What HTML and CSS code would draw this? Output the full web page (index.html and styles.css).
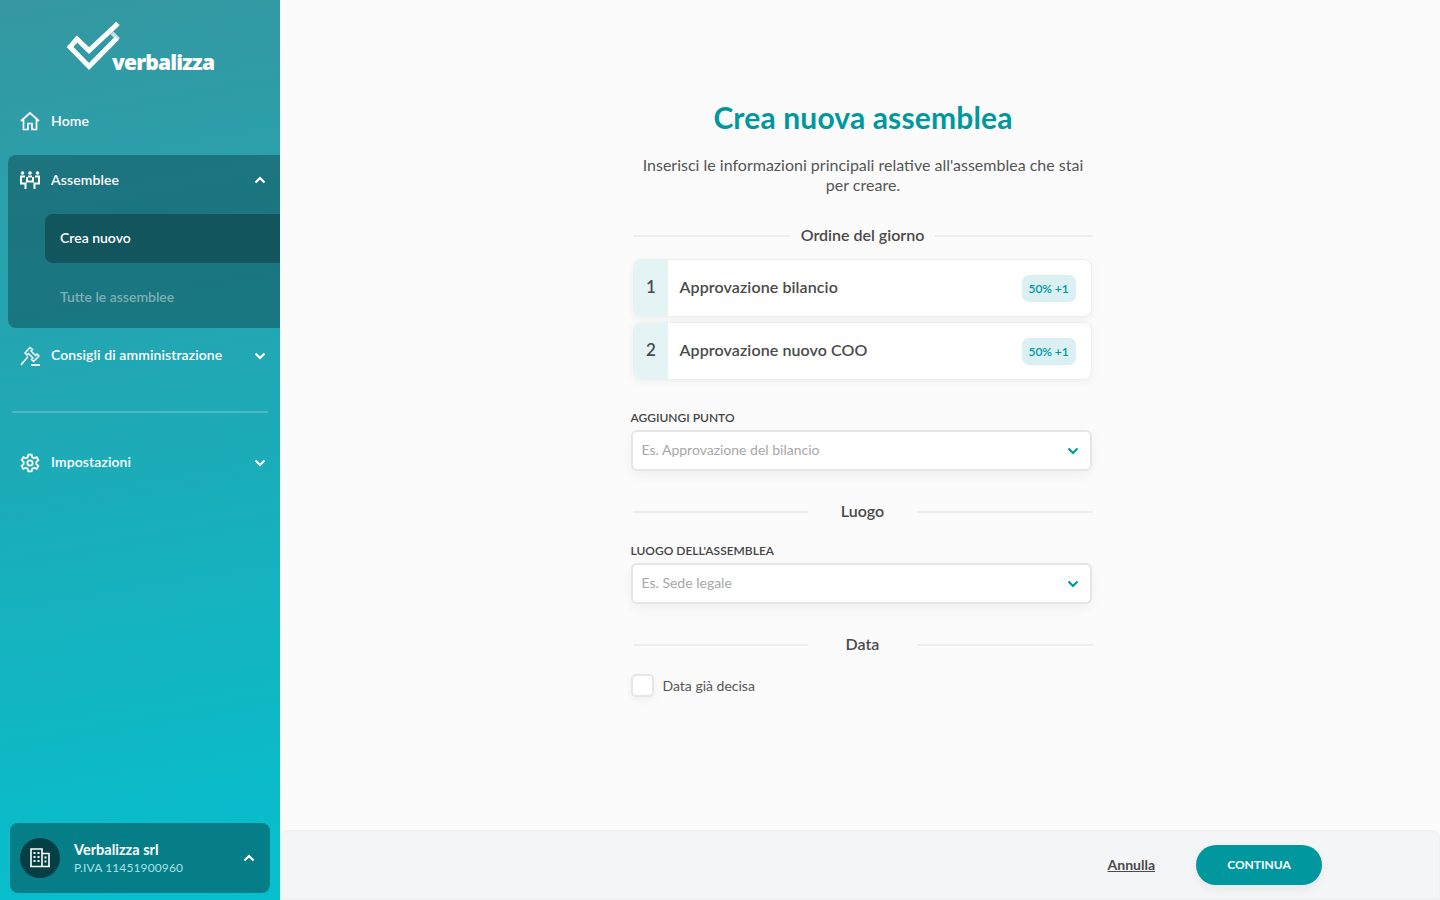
FILE: index.html
```html
<!DOCTYPE html>
<html lang="it">
<head>
    <meta charset="UTF-8">
    <meta name="viewport" content="width=device-width, initial-scale=1.0">
    <title>Crea nuova assemblea</title>
    <link rel="stylesheet" href="styles.css">
</head>
<body>
    <div class="wrapper">
        <aside class="sidebar">
            <div class="logo">
                <svg class="logo-mark" width="60" height="52" viewBox="0 0 60 52" fill="none">
                    <path d="M53 3.5 L24 30.5 L12 19 L5 27 L24 46.5 L52 18" stroke="#fff" stroke-width="5"/>
                    <path d="M53.5 19.5 L47 13" stroke="#fff" stroke-opacity="0.7" stroke-width="4"/>
                </svg>
                <span class="logo-text">verbalizza</span>
            </div>
            <nav class="nav">
                <a class="nav-item" href="#">
                    <svg class="nav-icon" viewBox="0 0 20 20" fill="none" stroke="#fff" stroke-width="1.7"><path d="M1 10 L10 2 L19 10 M3.5 8.5 V18.5 H8 V12.5 H12 V18.5 H16.5 V8.5"/></svg>
                    <span>Home</span>
                </a>
                <div class="nav-group">
                    <a class="nav-item group-head" href="#">
                        <svg class="nav-icon" viewBox="0 0 20 20" fill="#fff"><circle cx="2.5" cy="3" r="1.8"/><circle cx="10" cy="3" r="1.8"/><circle cx="17.5" cy="3" r="1.8"/><path d="M5 6.5 H1 V13.5 H5.5 V19 M15 6.5 H19 V13.5 H14.5 V19 M8 6.5 H12 M7 7 V11.5 H13 V7" fill="none" stroke="#fff" stroke-width="2"/></svg>
                        <span>Assemblee</span>
                        <svg class="chevron" viewBox="0 0 12 8" fill="none" stroke="#fff" stroke-width="2.2"><path d="M1.5 6.5 L6 2 L10.5 6.5"/></svg>
                    </a>
                    <a class="sub-item active" href="#">Crea nuovo</a>
                    <a class="sub-item muted" href="#">Tutte le assemblee</a>
                </div>
                <a class="nav-item board" href="#">
                    <svg class="nav-icon" viewBox="0 0 20 20" fill="none" stroke="#fff" stroke-width="1.5"><path d="M10 1.5 L5 7 L7 9 L8.5 7.5 L13 12 L11.5 13.5 L13.5 15.5 L19 10 L17 8 L15.5 9.5 L11 5 L12.5 3.5 Z M8 10.5 L1 19"/><path d="M11 19 H20" stroke-width="1.8"/></svg>
                    <span>Consigli di amministrazione</span>
                    <svg class="chevron" viewBox="0 0 12 8" fill="none" stroke="#fff" stroke-width="2.2"><path d="M1.5 1.5 L6 6 L10.5 1.5"/></svg>
                </a>
                <hr class="nav-rule">
                <a class="nav-item" href="#">
                    <svg class="nav-icon" viewBox="0 0 24 24" fill="none" stroke="#fff" stroke-width="2.1"><circle cx="12" cy="12" r="3.2"/><path d="M10 2 H14 L14.6 5 L17 6.2 L20 5 L22 8.5 L19.6 10.6 V13.4 L22 15.5 L20 19 L17 17.8 L14.6 19 L14 22 H10 L9.4 19 L7 17.8 L4 19 L2 15.5 L4.4 13.4 V10.6 L2 8.5 L4 5 L7 6.2 L9.4 5 Z"/></svg>
                    <span>Impostazioni</span>
                    <svg class="chevron" viewBox="0 0 12 8" fill="none" stroke="#fff" stroke-width="2.2"><path d="M1.5 1.5 L6 6 L10.5 1.5"/></svg>
                </a>
            </nav>
            <div class="company">
                <div class="company-icon">
                    <svg width="20" height="20" viewBox="0 0 20 20" fill="none" stroke="#fff" stroke-width="1.6"><path d="M0 18.5 H20 M1 18.5 V1 H12 V18.5 M12 5.5 H19 V18.5"/><path d="M3.5 5 H5.5 M7.5 5 H9.5 M3.5 9 H5.5 M7.5 9 H9.5 M3.5 13 H5.5 M7.5 13 H9.5 M14.5 9.5 H16.5 M14.5 13.5 H16.5" stroke-width="2"/></svg>
                </div>
                <div class="company-text">
                    <strong>Verbalizza srl</strong>
                    <small>P.IVA 11451900960</small>
                </div>
                <svg class="chevron" viewBox="0 0 12 8" fill="none" stroke="#fff" stroke-width="2.2"><path d="M1.5 6.5 L6 2 L10.5 6.5"/></svg>
            </div>
        </aside>

        <main class="main">
            <div class="content">
                <form class="form">
                    <h1>Crea nuova assemblea</h1>
                    <p class="intro">Inserisci le informazioni principali relative all'assemblea che stai per creare.</p>

                    <div class="section-title first"><span>Ordine del giorno</span></div>
                    <ul class="points">
                        <li class="point">
                            <span class="point-num">1</span>
                            <span class="point-name">Approvazione bilancio</span>
                            <span class="badge">50% +1</span>
                        </li>
                        <li class="point">
                            <span class="point-num">2</span>
                            <span class="point-name">Approvazione nuovo COO</span>
                            <span class="badge">50% +1</span>
                        </li>
                    </ul>

                    <label class="field-label add-label">AGGIUNGI PUNTO</label>
                    <div class="select">
                        <span>Es. Approvazione del bilancio</span>
                        <svg class="select-arrow" viewBox="0 0 12 8" fill="none" stroke="#00989f" stroke-width="2.2"><path d="M1.5 1.5 L6 6 L10.5 1.5"/></svg>
                    </div>

                    <div class="section-title wide"><span>Luogo</span></div>
                    <label class="field-label">LUOGO DELL'ASSEMBLEA</label>
                    <div class="select">
                        <span>Es. Sede legale</span>
                        <svg class="select-arrow" viewBox="0 0 12 8" fill="none" stroke="#00989f" stroke-width="2.2"><path d="M1.5 1.5 L6 6 L10.5 1.5"/></svg>
                    </div>

                    <div class="section-title wide"><span>Data</span></div>
                    <label class="check">
                        <span class="check-box"></span>
                        <span>Data già decisa</span>
                    </label>
                </form>
            </div>
            <footer class="footer">
                <a class="cancel" href="#">Annulla</a>
                <button class="continue" type="button">CONTINUA</button>
            </footer>
        </main>
    </div>
</body>
</html>
```

FILE: styles.css
```css
*{
    box-sizing: border-box;
}
html, body{
    height: 100%;
}
body{
    margin: 0;
    font-family: "Lato", "Liberation Sans", sans-serif;
    color: #4a4a4a;
    background-color: #fbfbfb;
}
a{
    text-decoration: none;
    color: inherit;
}
.wrapper{
    display: flex;
    height: 900px;
    overflow: hidden;
}

/* sidebar */
.sidebar{
    width: 280px;
    flex-shrink: 0;
    display: flex;
    flex-direction: column;
    color: #fff;
    background: linear-gradient(170deg, #3597a1 0%, #1fa9b5 45%, #05c0cf 100%);
}
.logo{
    height: 90px;
    padding: 20px 0 0 65px;
    display: flex;
    align-items: flex-start;
}
.logo-mark{
    flex-shrink: 0;
}
.logo-text{
    margin: 28px 0 0 -13px;
    font-family: "Open Sans", sans-serif;
    font-size: 21px;
    font-weight: 800;
    line-height: 28px;
    letter-spacing: -0.8px;
}
.nav{
    flex: 1;
    padding-left: 8px;
    font-size: 14px;
}
.nav-item{
    height: 59px;
    display: flex;
    align-items: center;
    gap: 11px;
    padding: 0 14px 0 12px;
    font-weight: 600;
    letter-spacing: 0.1px;
}
.nav-item span{
    flex: 1;
    position: relative;
    top: -1px;
}
.nav-icon{
    width: 20px;
    height: 20px;
    flex-shrink: 0;
}
.chevron{
    width: 12px;
    height: 8px;
    flex-shrink: 0;
}
.nav > .nav-item:first-child{
    margin-top: 1px;
    height: 60px;
    margin-bottom: 4px;
}
.nav-group{
    height: 173px;
    padding-bottom: 5px;
    border-radius: 8px 0 0 8px;
    background-color: rgba(20, 90, 100, 0.62);
}
.group-head{
    padding-bottom: 9px;
}
.nav-item.board{
    padding-bottom: 4px;
}
.sub-item{
    height: 49px;
    margin-left: 37px;
    padding: 0 15px 2px;
    display: flex;
    align-items: center;
    border-radius: 8px 0 0 8px;
    font-weight: 600;
}
.sub-item.active{
    background-color: #12555c;
}
.sub-item.muted{
    margin-top: 10px;
    color: #7fb0b5;
}
.nav-rule{
    margin: 24px 12px 20px 4px;
    height: 2px;
    border: 0;
    background-color: rgba(255, 255, 255, 0.2);
}
.company{
    height: 70px;
    margin: 0 10px 7px;
    padding: 0 15px 0 10px;
    display: flex;
    align-items: center;
    border-radius: 8px;
    background-color: #067e88;
}
.company-icon{
    width: 40px;
    height: 40px;
    border-radius: 50%;
    background-color: #053f46;
    display: flex;
    align-items: center;
    justify-content: center;
    margin-right: 14px;
}
.company-text{
    flex: 1;
    display: flex;
    flex-direction: column;
    padding-top: 1px;
}
.company-text strong{
    font-size: 14.5px;
    line-height: 18px;
    font-weight: 700;
}
.company-text small{
    font-size: 12px;
    line-height: 18px;
    letter-spacing: 0.12px;
    color: #a5e3e8;
}

/* contenuto */
.main{
    flex: 1;
    display: flex;
    flex-direction: column;
    min-width: 0;
}
.content{
    flex: 1;
    display: flex;
    justify-content: center;
    padding-left: 3px;
}
.form{
    width: 462px;
    padding-top: 99px;
}
h1{
    margin: 0;
    padding-left: 3px;
    text-align: center;
    font-size: 30px;
    line-height: 36px;
    font-weight: 700;
    letter-spacing: 0.15px;
    color: #00989f;
}
.intro{
    margin: 20px 0 0;
    padding: 0 2px 0 5px;
    text-align: center;
    font-size: 16px;
    line-height: 20px;
    color: #555;
}
.section-title{
    display: flex;
    align-items: center;
    margin: 30px 0 0 2px;
    font-size: 16px;
    line-height: 20px;
    font-weight: 600;
    color: #4a4a4a;
}
.section-title.first{
    margin-top: 30px;
    gap: 11px;
}
.section-title.wide span{
    width: 109px;
    text-align: center;
}
.section-title::before, .section-title::after{
    content: "";
    flex: 1;
    height: 2px;
    margin-top: 2px;
    background-color: #eeeeee;
}
.points{
    list-style: none;
    margin: 14px 0 0 2px;
    padding: 0;
    width: 459px;
}
.point{
    height: 58px;
    margin-bottom: 5px;
    display: flex;
    align-items: center;
    overflow: hidden;
    border: 1px solid #eeeeee;
    border-radius: 8px;
    background-color: #fff;
    box-shadow: 0 2px 8px rgba(0, 0, 0, 0.05);
}
.point-num{
    width: 34px;
    height: 100%;
    flex-shrink: 0;
    display: flex;
    align-items: center;
    justify-content: center;
    padding: 0 0 4px 1px;
    font-size: 17px;
    font-weight: 600;
    background-color: #e4f4f5;
}
.point-name{
    flex: 1;
    padding: 0 0 4px 12px;
    font-size: 16px;
    font-weight: 600;
    letter-spacing: 0.1px;
}
.badge{
    margin-right: 15px;
    height: 27px;
    padding: 0 7px;
    display: flex;
    align-items: center;
    border-radius: 7px;
    font-size: 12px;
    font-weight: 600;
    letter-spacing: -0.1px;
    color: #00989f;
    background-color: #dbf0f2;
}
.field-label{
    display: block;
    margin: 22px 0 0;
    font-size: 12px;
    line-height: 16px;
    font-weight: 600;
    color: #444;
}
.field-label.add-label{
    margin-top: 30px;
}
.select{
    width: 461px;
    height: 41px;
    margin-top: 4px;
    padding: 0 11px 2px 9px;
    display: flex;
    align-items: center;
    justify-content: space-between;
    border: 2px solid #e6e6e6;
    border-radius: 6px;
    font-size: 14px;
    color: #a8a8a8;
    background-color: #fff;
    box-shadow: 0 4px 12px rgba(0, 0, 0, 0.05);
}
.select-arrow{
    width: 12px;
    height: 8px;
    margin: 3px 0 0 0;
}
.check{
    display: flex;
    align-items: center;
    gap: 9px;
    margin-top: 20px;
    font-size: 14px;
    color: #555;
}
.check-box{
    width: 23px;
    height: 23px;
    border: 2px solid #e6e6e6;
    border-radius: 5px;
    background-color: #fff;
    box-shadow: 0 3px 8px rgba(0, 0, 0, 0.05);
}
.footer{
    height: 70px;
    flex-shrink: 0;
    display: flex;
    align-items: center;
    justify-content: flex-end;
    gap: 41px;
    padding-right: 117px;
    border: 1px solid #f0f0f0;
    border-radius: 8px 8px 0 0;
    background-color: #f4f5f7;
}
.cancel{
    padding-bottom: 2px;
    font-size: 14px;
    font-weight: 700;
    text-decoration: underline;
    color: #4a4a4a;
}
.continue{
    width: 126px;
    height: 40px;
    padding: 0 0 1px;
    border: 0;
    border-radius: 20px;
    font-family: inherit;
    font-size: 12px;
    font-weight: 700;
    color: #fff;
    background-color: #00979f;
    box-shadow: 0 4px 10px rgba(0, 0, 0, 0.06);
}
```
